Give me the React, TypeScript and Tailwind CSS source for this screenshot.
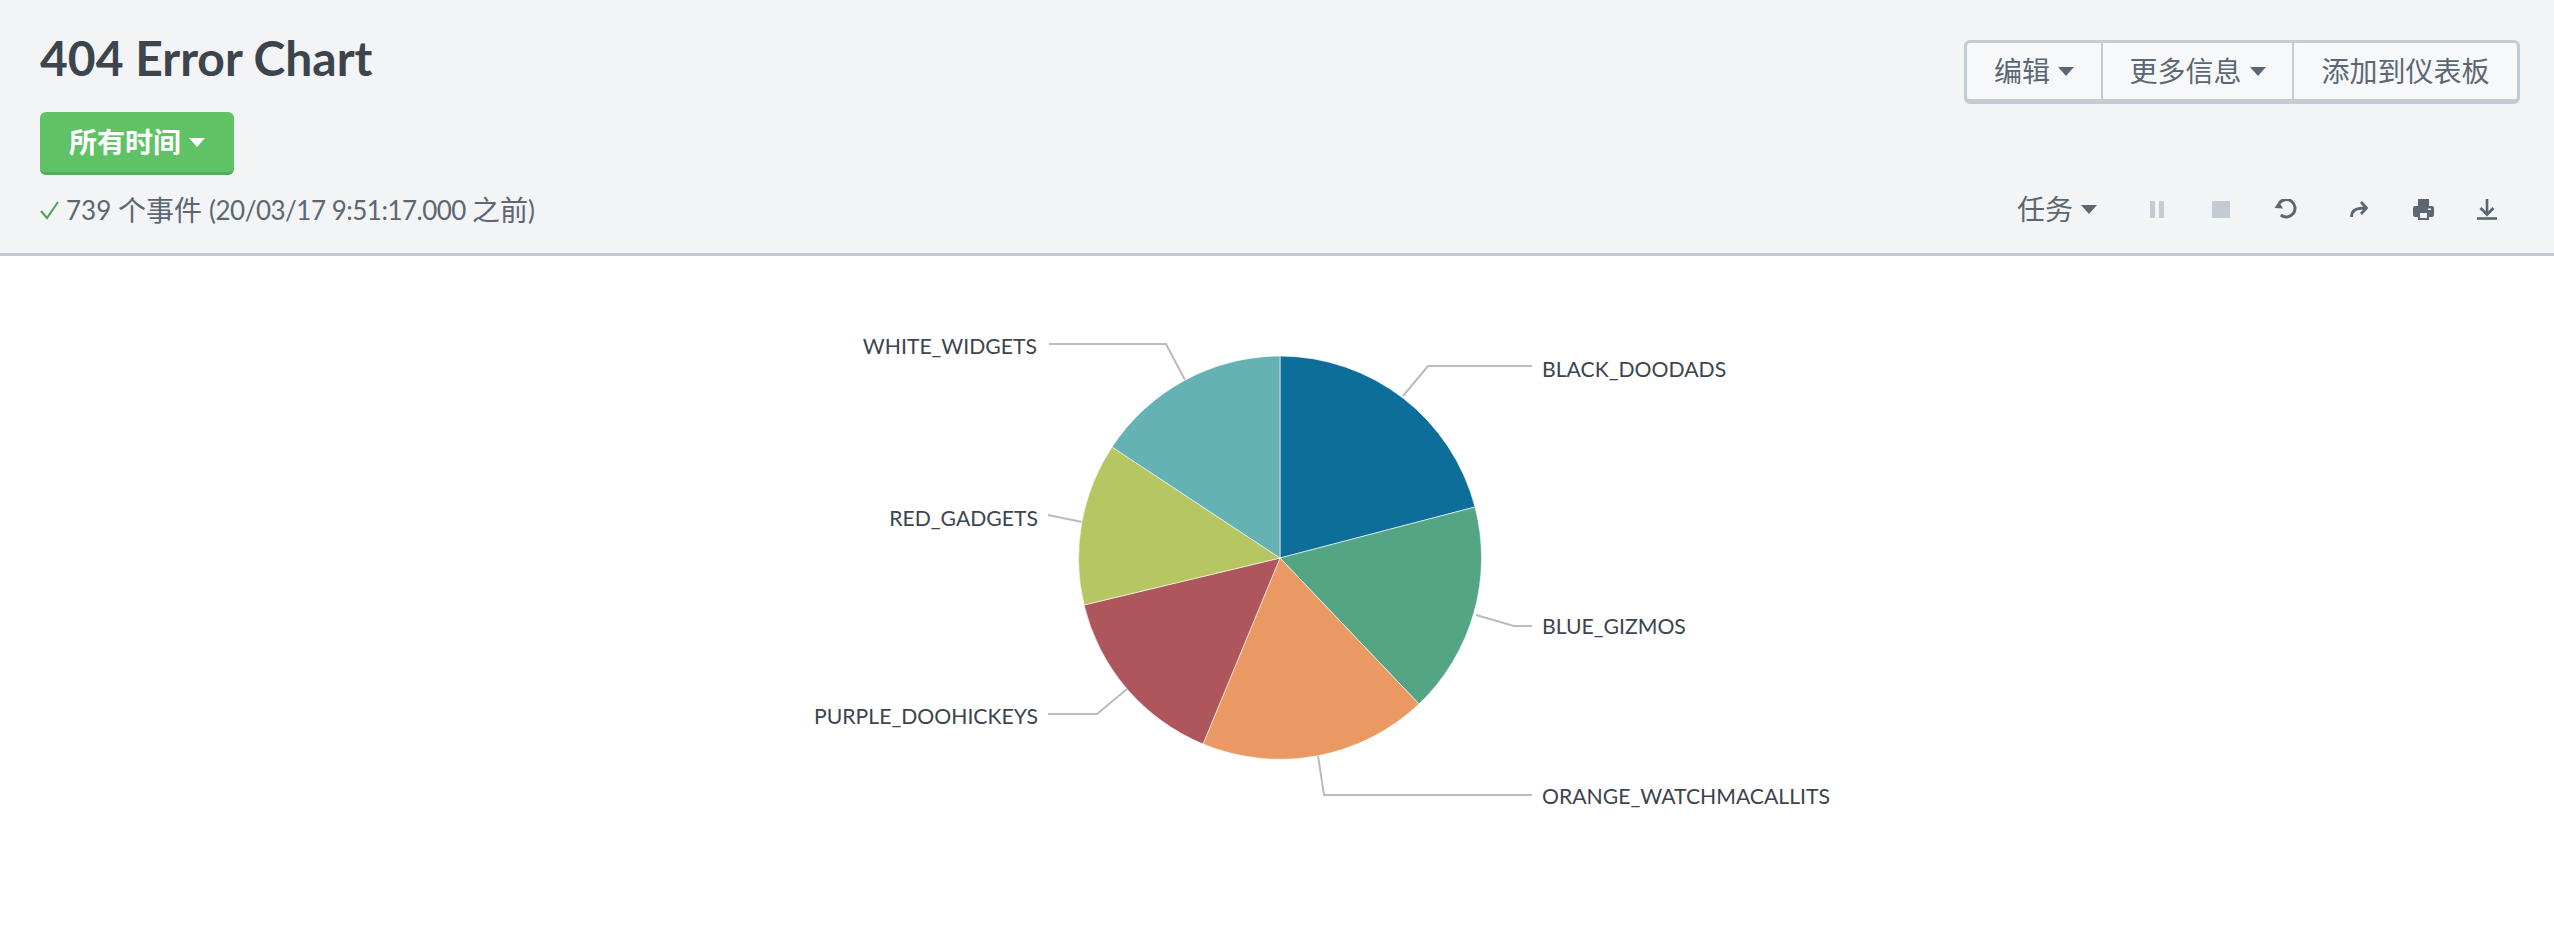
import type { ReactNode } from "react";

const sans = "font-['Lato','Noto_Sans_CJK_SC',sans-serif]";

const slices = [
  { color: "#0e6e9a", d: "M1280 558 L1280 356 A202 202 0 0 1 1475 507 Z" },
  { color: "#53a584", d: "M1280 558 L1475 507 A202 202 0 0 1 1419 704 Z" },
  { color: "#ea9963", d: "M1280 558 L1419 704 A202 202 0 0 1 1203 744 Z" },
  { color: "#ae565b", d: "M1280 558 L1203 744 A202 202 0 0 1 1084 605 Z" },
  { color: "#b6c662", d: "M1280 558 L1084 605 A202 202 0 0 1 1112 447 Z" },
  { color: "#65b2b4", d: "M1280 558 L1112 447 A202 202 0 0 1 1280 356 Z" },
];

const leaders = [
  "M1403 396 L1428 366 L1532 366",
  "M1476 615 L1514 626 L1532 626",
  "M1317 749 L1324 795 L1532 795",
  "M1049 344 L1166 344 L1185 380",
  "M1048 515 L1082 522",
  "M1048 714 L1097 714 L1127 689",
];

const labels = [
  { text: "BLACK_DOODADS", x: 1542, y: 377, anchor: "start" },
  { text: "BLUE_GIZMOS", x: 1542, y: 634, anchor: "start" },
  { text: "ORANGE_WATCHMACALLITS", x: 1542, y: 804, anchor: "start" },
  { text: "WHITE_WIDGETS", x: 1037, y: 354, anchor: "end" },
  { text: "RED_GADGETS", x: 1038, y: 526, anchor: "end" },
  { text: "PURPLE_DOOHICKEYS", x: 1038, y: 724, anchor: "end" },
];

function Caret({ className = "border-t-[#5c6773]" }: { className?: string }) {
  return <span className={`ml-2 inline-block h-0 w-0 border-x-[8px] border-t-[9px] border-x-transparent ${className}`} />;
}

function GroupButton({ children, last }: { children: ReactNode; last?: boolean }) {
  return (
    <button className={`flex h-full items-center justify-center ${last ? "" : "border-r-[2px] border-[#c3cbd4]"}`}>
      {children}
    </button>
  );
}

export default function App() {
  return (
    <div className={`h-[932px] w-[2554px] overflow-hidden bg-white ${sans}`}>
      <header className="flex h-[256px] justify-between border-b-[3px] border-[#c3cbd4] bg-[#f2f4f5] pl-[40px] pr-[34px]">
        <div className="flex flex-col items-start pt-[28px]">
          <h1 className="text-[48px] leading-[60px] font-bold text-[#3c444d]">404 Error Chart</h1>
          <button className="mt-[24px] flex h-[63px] w-[194px] items-center justify-center rounded-[6px] border-b-[3px] border-[#56ad58] bg-[#5fc264] text-[28px] font-semibold text-white">
            所有时间
            <Caret className="border-t-white" />
          </button>
          <div className="mt-[15px] flex items-center text-[26px] leading-[40px] whitespace-pre text-[#5c6773]">
            <svg viewBox="0 0 20 20" className="mr-[6px] h-[20px] w-[20px]" fill="none" stroke="#4fa352" strokeWidth="2">
              <path d="M1 11 L7 18 L18 2" />
            </svg>
            <span>739 </span>
            <span className="text-[28px]">个事件 </span>
            <span className="tracking-[-0.5px]">(20/03/17 9:51:17.000 </span>
            <span className="text-[28px]">之前</span>
            <span>)</span>
          </div>
        </div>
        <div className="flex flex-col items-end pt-[40px]">
          <div className="grid h-[64px] w-[556px] grid-cols-[136px_191px_1fr] rounded-[6px] border-[3px] border-b-[5px] border-[#c3cbd4] bg-[#f7f8fa] text-[28px] text-[#5c6773]">
            <GroupButton>
              编辑
              <Caret />
            </GroupButton>
            <GroupButton>
              更多信息
              <Caret />
            </GroupButton>
            <GroupButton last>添加到仪表板</GroupButton>
          </div>
          <div className="mt-[80px] flex h-[50px] items-center pr-[23px] text-[#5c6773]">
            <span className="flex items-center text-[28px]">
              任务
              <Caret />
            </span>
            <div className="ml-[53px] flex h-[17px] gap-[4px]">
              <span className="w-[5px] bg-[#c3cbd4]" />
              <span className="w-[5px] bg-[#c3cbd4]" />
            </div>
            <span className="ml-[48px] h-[17px] w-[18px] bg-[#c3cbd4]" />
            <svg viewBox="0 0 24 20" className="ml-[44px] h-[20px] w-[24px]" fill="none">
              <path d="M5.3 4.1 A8.7 8.7 0 1 1 6.8 16" stroke="#5c6773" strokeWidth="3" />
              <path d="M0.5 9 L9 9.5 L5 2.5 Z" fill="#5c6773" />
            </svg>
            <svg viewBox="0 0 18 16" className="ml-[52px] h-[16px] w-[18px]" fill="none">
              <path d="M1.5 16 C1.5 10 5 7 15 7" stroke="#5c6773" strokeWidth="2.8" />
              <path d="M11 1 L16.5 7 L11 13" stroke="#5c6773" strokeWidth="2.8" />
            </svg>
            <svg viewBox="0 0 21 21" className="ml-[45px] h-[21px] w-[21px]">
              <path d="M5 0 H16 V7 H19 Q21 7 21 9 V16 Q21 18 19 18 H16 V21 H5 V18 H2 Q0 18 0 16 V9 Q0 7 2 7 H5 Z" fill="#5c6773" />
              <rect x="7" y="14" width="7" height="5" fill="#f2f4f5" />
              <rect x="15" y="9.5" width="3" height="1.5" fill="#f2f4f5" />
            </svg>
            <svg viewBox="0 0 20 21" className="ml-[43px] h-[21px] w-[20px]" fill="none" stroke="#5c6773">
              <path d="M10 0 V15" strokeWidth="2.6" />
              <path d="M3.5 9 L10 15.5 L16.5 9" strokeWidth="2.8" />
              <path d="M0 19.5 H20" strokeWidth="2.6" />
            </svg>
          </div>
        </div>
      </header>
      <svg viewBox="0 256 2554 676" className="block h-[676px] w-[2554px]">
        {leaders.map((d) => (
          <path key={d} d={d} fill="none" stroke="#bbbbbb" strokeWidth="2" />
        ))}
        {slices.map((s) => (
          <path key={s.color} d={s.d} fill={s.color} stroke="#ffffff" strokeWidth="0.6" />
        ))}
        {labels.map((l) => (
          <text key={l.text} x={l.x} y={l.y} textAnchor={l.anchor as "start" | "end"} fontSize="21.2" fill="#3c444d">
            {l.text}
          </text>
        ))}
      </svg>
    </div>
  );
}
